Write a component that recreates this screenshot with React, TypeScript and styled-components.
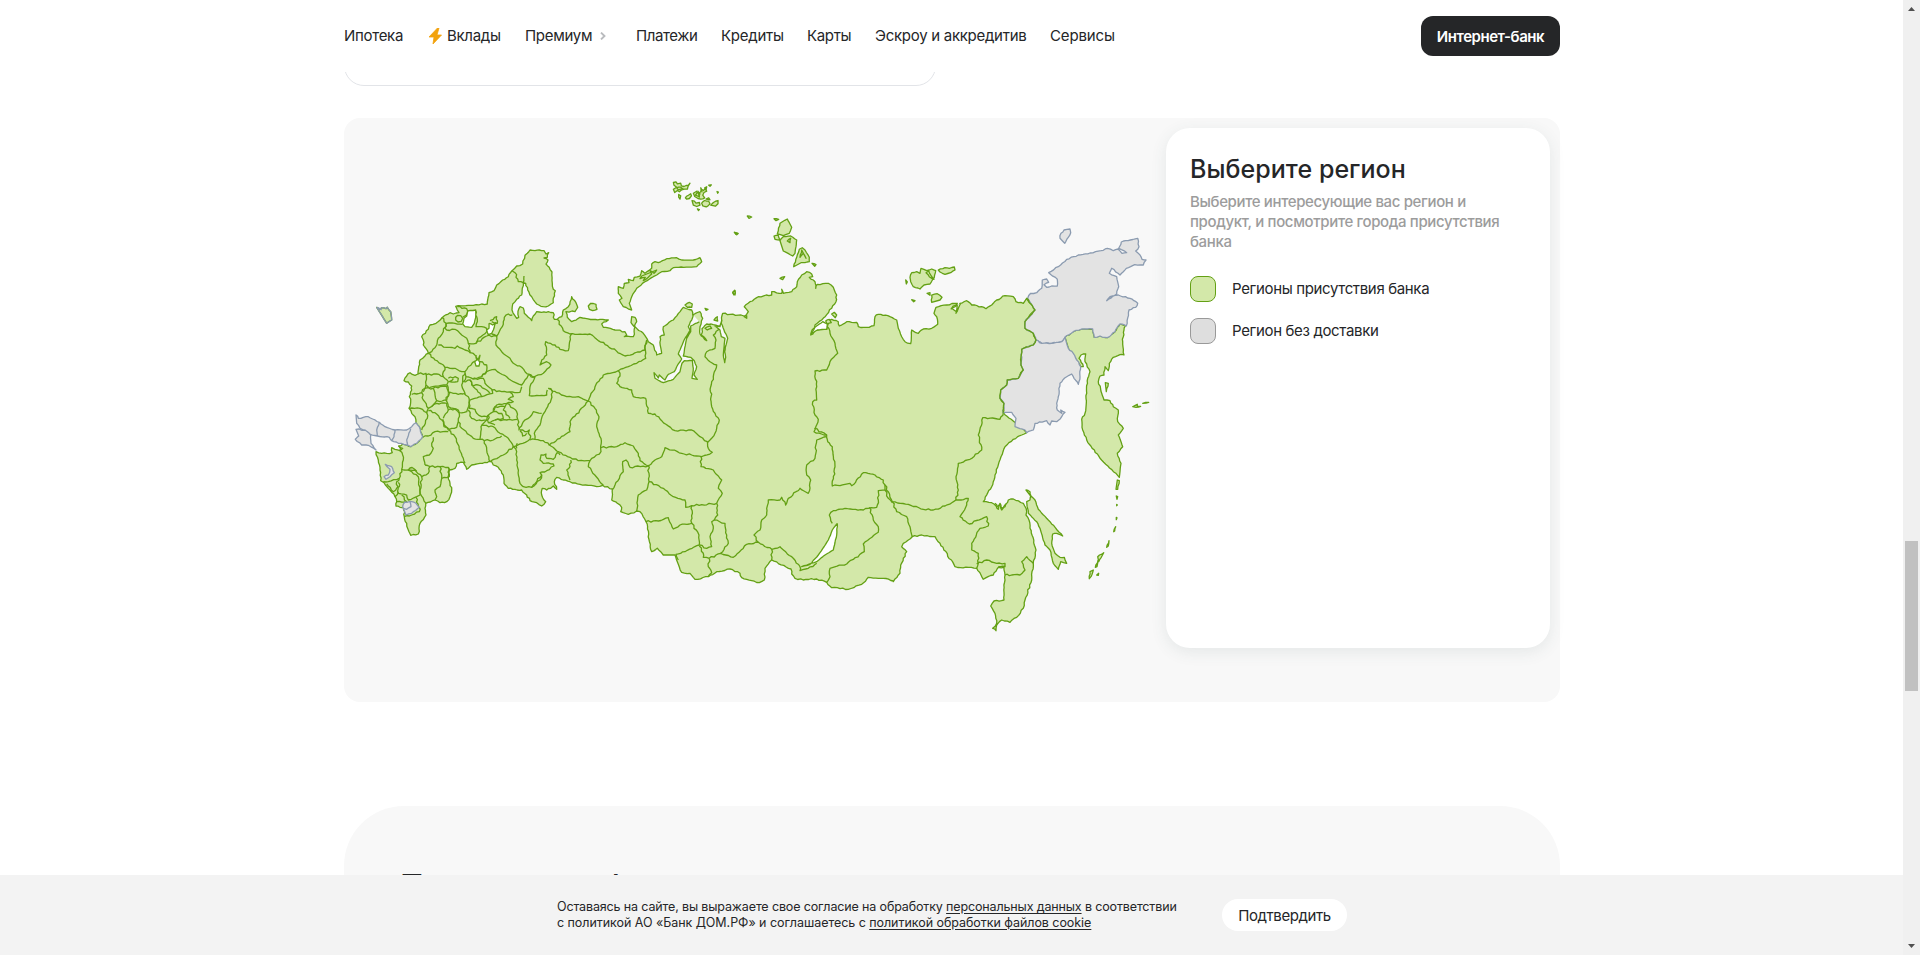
import React from "react";
import styled, { createGlobalStyle } from "styled-components";

const GlobalStyle = createGlobalStyle`
  * { box-sizing: border-box; }
  body { margin: 0; background: #fff; overflow: hidden; }
  body, button { font-family: Inter, "Liberation Sans", sans-serif; }
`;

const Window = styled.div`
  display: grid;
  grid-template-columns: 1fr 17px;
  width: 1920px;
  height: 955px;
  overflow: hidden;
  color: #252628;
`;
const Page = styled.div`
  display: flex;
  flex-direction: column;
  height: 955px;
  min-width: 0;
`;
const Container = styled.div`
  width: 1216px;
  margin-left: 344px;
`;
const Header = styled.header`
  flex: none;
  height: 72px;
  background: #fff;
`;
const HeaderRow = styled(Container)`
  display: flex;
  align-items: center;
  height: 72px;
`;
const Nav = styled.nav`
  display: flex;
  flex: 1;
  align-items: center;
`;
const NavItem = styled.a<{ $w: number; $track: number }>`
  display: flex;
  align-items: center;
  flex: none;
  width: ${(p) => p.$w}px;
  font-size: 15px;
  line-height: 24px;
  letter-spacing: ${(p) => p.$track}px;
  white-space: nowrap;
  svg { flex: none; }
`;
const BankButton = styled.button`
  width: 139px;
  height: 40px;
  padding: 0;
  border: 0;
  border-radius: 12px;
  background: #252628;
  color: #fff;
  font-size: 15px;
  font-weight: 600;
  letter-spacing: -0.45px;
  white-space: nowrap;
`;
const Content = styled.main`
  flex: 1;
  min-height: 0;
  overflow: hidden;
`;
const PreviousCard = styled.div`
  width: 592px;
  height: 14px;
  overflow: hidden;
  display: flex;
  align-items: flex-end;
  &::after {
    content: "";
    flex: 1;
    height: 60px;
    border: 1px solid #e2e4e8;
    border-radius: 20px;
  }
`;
const MapCard = styled.section`
  display: flex;
  align-items: flex-start;
  height: 584px;
  margin-top: 32px;
  padding: 10px 10px 0 0;
  border-radius: 16px;
  background: #f8f8f8;
`;
const MapSvg = styled.svg`
  flex: none;
  width: 822px;
  height: 574px;
  display: block;
`;
const Panel = styled.aside`
  width: 384px;
  height: 520px;
  padding: 25px 24px;
  border-radius: 24px;
  background: #fff;
  box-shadow: 0 4px 16px rgba(60, 90, 90, 0.1);
`;
const PanelTitle = styled.h2`
  margin: 0;
  font-size: 25px;
  font-weight: 450;
  line-height: 32px;
  letter-spacing: 0.05px;
`;
const PanelText = styled.p`
  margin: 7px 0 0;
  color: #9c9c9c;
  font-size: 15px;
  font-weight: 500;
  line-height: 20px;
  letter-spacing: -0.36px;
  white-space: nowrap;
`;
const Legend = styled.ul`
  display: grid;
  gap: 16px;
  margin: 24px 0 0;
  padding: 0;
  list-style: none;
`;
const LegendItem = styled.li`
  display: flex;
  align-items: center;
  gap: 16px;
  height: 26px;
  font-size: 15px;
  letter-spacing: -0.35px;
  white-space: nowrap;
`;
const LegendLabel = styled.span`
  padding-bottom: 2px;
`;
const Swatch = styled.span<{ $fill: string; $line: string }>`
  width: 26px;
  height: 26px;
  border: 1px solid ${(p) => p.$line};
  border-radius: 8px;
  background: ${(p) => p.$fill};
`;
const InfoSection = styled.section`
  height: 400px;
  margin-top: 104px;
  padding: 59px 56px;
  border-radius: 60px;
  background: #f8f8f8;
`;
const InfoTitle = styled.h2`
  margin: 0;
  font-size: 32px;
  font-weight: 500;
  line-height: 44px;
  letter-spacing: 0.45px;
`;
const CookieBar = styled.footer`
  flex: none;
  display: flex;
  align-items: center;
  height: 80px;
  padding-left: 557px;
  background: #f3f3f3;
`;
const CookieText = styled.div`
  flex: none;
  width: 665px;
  padding-bottom: 1px;
  font-size: 12.5px;
  line-height: 16px;
  white-space: nowrap;
  a { text-decoration: underline; text-underline-offset: 2px; }
`;
const CookieLine = styled.div<{ $track: number }>`
  letter-spacing: ${(p) => p.$track}px;
`;
const ConfirmButton = styled.button`
  width: 125px;
  height: 32px;
  padding: 0;
  border: 0;
  border-radius: 16px;
  background: #fff;
  color: #252628;
  font-size: 15px;
  letter-spacing: -0.4px;
`;
const Scrollbar = styled.div`
  display: flex;
  flex-direction: column;
  align-items: center;
  justify-content: space-between;
  padding: 7px 0;
  background: #f0f0f0;
  svg { display: block; flex: none; }
`;
const ThumbTrack = styled.div`
  flex: 1;
  padding-top: 530px;
`;
const Thumb = styled.div`
  width: 13px;
  height: 150px;
  background: #c1c1c1;
`;

/* ---------- Map geometry ---------- */

type Point = [number, number];
type Sheet = "A" | "B" | "C" | "D" | "E" | "F" | "G";

/* Origins of the map sheets; coordinates inside a sheet are thirds of a unit. */
const ORIGIN: Record<Sheet, Point> = {
  A: [340, 230],
  B: [500, 220],
  C: [700, 170],
  D: [900, 250],
  E: [600, 420],
  F: [880, 420],
  G: [726.7, 172.5],
};

const points = (sheet: Sheet, data: string): Point[] => {
  const n = data.trim().split(/[\s,]+/).map(Number);
  const [ox, oy] = ORIGIN[sheet];
  const out: Point[] = [];
  for (let i = 0; i + 1 < n.length; i += 2) out.push([ox + n[i] / 3, oy + n[i + 1] / 3]);
  return out;
};

const wander = (list: Point[], amount: number): string => {
  let d = "";
  let seed = 7;
  const rnd = () => {
    seed = (seed * 16807) % 2147483647;
    return seed / 2147483647 - 0.5;
  };
  list.forEach((p, i) => {
    if (i === 0) {
      d += `M${p[0].toFixed(1)} ${p[1].toFixed(1)}`;
      return;
    }
    const q = list[i - 1];
    const dx = p[0] - q[0];
    const dy = p[1] - q[1];
    const len = Math.hypot(dx, dy);
    const steps = Math.max(1, Math.round(len / 2.6));
    for (let k = 1; k < steps; k++) {
      const t = k / steps;
      const off = rnd() * amount;
      d += `L${(q[0] + dx * t - (dy / len) * off).toFixed(1)} ${(q[1] + dy * t + (dx / len) * off).toFixed(1)}`;
    }
    d += `L${p[0].toFixed(1)} ${p[1].toFixed(1)}`;
  });
  return d;
};

const MAINLAND: Point[] = [
  ...points("A", "652 268 643 268 640 248 625 245 605 247 590 245 580 258 575 272 565 262 553 250 550 234 540 230 534 244 536 262 530 265 524 256 516 240 518 222 530 208 545 195 547 175 550 158 557 160 563 180 575 200 590 222 610 230 625 228 640 218 640 205 646 182 640 178 637 160 636 126 630 118 618 102 624 90 612 84 622 82 626 68 618 72 612 62 598 60 585 62 570 60 562 70 555 76 548 102 530 108 516 122 505 140 488 150 470 165 462 182 447 188 443 210 442 222 400 226 347 229 352 240 357 248 340 252 330 248 312 258 305 265 288 280 270 285 265 298 245 320 250 330 250 345 265 370 255 378 240 390 236 410 234 432 225 436 210 428 200 438 192 452 205 456 215 468 215 480 208 500 212 515 207 535 215 550 225 560 228 578 238 590 248 622 230 640 212 650 200 645 188 642 176 648 188 655 180 662 165 658 155 653 157 668 140 670 125 670 108 665 115 690 120 720 122 752 132 758 150 780 165 800 170 815 168 828 180 832 192 832 193 860 200 880 207 905 212 916 235 912 240 880 258 855 255 835 257 820 285 810 300 818 320 815 330 800 335 780 330 760 325 740 328 720 345 715 350 700 370 697 380 718 395 705 420 700 455 695 460 705 475 712 490 735 492 760 505 775 525 778 545 780 560 795 570 812 590 818 605 828 617 815 605 795 607 775 620 780 632 775 640 768 650 778 643 755 650 742 670 750 690 755 720 763 770 770"),
  ...points("E", "8 196 37 207 35 240 52 250 65 262 62 275 85 283 110 273 120 275 138 305 155 395 172 385 190 405 225 405 245 457 270 460 285 478 325 470 350 455 390 447 420 460 425 473 478 488 493 480 495 445 515 420 573 447 575 462 585 475 610 480 650 477 680 487 695 503 745 508 785 493 805 472 850 475 880 483"),
  ...points("F", "40 485 60 460 62 435 80 395 65 380 70 370 97 350 125 345 165 350 180 370 225 440 290 445 310 478 340 465 355 442 372 442 375 465 372 540 342 543 332 558 345 580 350 610 338 625 348 632 350 615 365 600 390 607 410 592 430 565 435 540 455 480 460 430 468 390 450 325 447 300 438 285"),
  ...points("D", "380 785 370 760 340 747 325 750 315 770 305 775 298 765 290 770 275 758 250 755 275 710 285 675 303 620 315 590 340 568 365 555 380 548 310 488 408 270 400 250 375 235 375 215 405 180 380 145 370 160 348 155 340 140 315 137 290 150 275 165 258 176 245 170 215 165 200 152 180 160 170 185 155 175 172 160 140 165 108 172 105 180"),
  ...points("C", "702 430 710 440 713 463 695 475 670 477 655 490 635 480 632 521 615 515 605 500 595 475 590 450 570 440 535 433 525 440 522 467 500 472 475 470 470 457 440 455 418 468 415 455 395 448 380 455 380 478 350 480 332 495 345 465 365 450 395 415 408 395 410 375 400 352 385 340 352 343 347 355 345 335 328 322 338 320 335 312 320 305 305 315 292 335 290 350 275 365 250 370 245 358 245 370 215 365 215 375 175 380 150 395 133 410 145 425 133 440 140 445 140 437 90 433 68 430"),
  ...points("B", "665 300 664 318 655 318 640 314 620 312 606 326 604 345 620 362 600 342 600 320 608 295 600 275 578 285 575 270 550 262 520 300 490 320 493 345 480 350 485 400 470 405 460 375 445 365 430 340 405 320 400 350 373 350 380 345 375 335 345 330 310 322 305 312 325 300 300 298 280 298 240 292 215 305 202 292 198 275 225 275 233 262 228 248 215 230 205 260 190 270 185 290 172 298"),
];

const BORDERS: [Sheet, string[]][] = [
  ["A", [
    "516 122 525 128 535 155 550 158 552 138",
    "405 240 412 275 408 290 425 290 440 295 440 305",
    "352 230 380 236 383 243 378 256 368 262",
    "517 255 505 252 493 262 490 275 487 290 470 318 455 312",
    "305 262 318 280 345 280 367 283", "450 272 460 268 470 260 472 280 455 275",
    "318 280 315 295 320 300 345 298 360 310 380 325 385 340 408 340 415 325 440 305",
    "318 280 310 305 295 325 290 345 275 365 265 370",
    "295 345 320 352 345 355 352 348 375 360 400 370 410 378", "385 340 390 370",
    "440 318 470 318 468 345 485 365 510 385 520 400 545 412 562 432", "408 340 440 318",
    "265 370 285 390 310 405 315 412 345 415 365 425 375 425 385 410 405 393",
    "420 395 440 405 440 422 425 440 400 447 378 440 375 430",
    "234 432 258 430 258 465 270 475", "258 435 290 432 310 440 325 455 320 465 270 472",
    "258 465 245 488 215 493", "315 412 310 425 310 440",
    "325 445 345 440 355 445 353 455 328 455 340 447",
    "375 425 368 445 365 465 375 490 355 493 325 487 322 465",
    "245 488 250 510 265 535 260 548 240 535 207 535",
    "250 485 255 475 280 475 285 495 290 512 280 525 265 535",
    "280 475 300 470 320 470 328 490 320 510 300 515 290 512",
    "275 530 290 520 320 520 325 540 310 565", "265 542 285 548 305 570",
    "260 548 262 565 245 600", "305 570 318 590 325 600",
    "325 490 318 510 325 530 355 540 358 548 380 545 388 520 385 500 372 490",
    "325 540 345 537 358 550 355 575 350 592 328 598 312 590 308 568",
    "378 440 370 455 390 450 400 470 420 490 425 500 390 510",
    "395 447 430 445 435 460 455 478 458 490 425 500", "390 450 395 465 415 465 440 480 450 490",
    "425 440 440 425 465 418 480 430 500 440 520 455 545 465 555 450 565 435", "455 480 485 485 540 487 545 470",
    "510 487 520 500 505 508 520 515 500 520 470 525 460 545 440 560 425 560 410 550 405 538 388 535 390 510",
    "385 540 395 565 410 572 440 570 445 555", "355 575 365 595 400 625 420 628 423 590 440 570",
    "460 545 465 530 495 530 500 520", "460 545 485 550 490 565 465 570 445 578",
    "500 520 520 535 530 545 533 568", "495 530 490 540 510 565", "445 555 445 578 465 585",
    "565 435 585 440 570 470 568 497 620 495 622 480",
    "533 568 537 600 550 575 575 555 580 545 605 550",
    "465 570 500 570 533 568", "540 600 555 605 568 600 565 610 572 618 570 628 548 640 520 650 505 625 480 610 460 590 425 585",
    "540 602 548 618 560 610", "433 632 460 630 485 618", "420 628 433 632 440 660 450 695", "520 650 490 675 450 695",
    "325 600 345 620 370 685 375 700", "248 622 265 618 285 605 325 605",
    "280 622 275 640 280 655 268 675 250 680 255 705",
    "176 648 188 675 190 690 185 718 205 720 225 720 245 740 265 730 270 710 255 705", "270 710 300 710 325 712 328 720",
    "185 718 178 745 145 755 130 755", "178 745 170 755 175 790 200 795 205 810 230 800 240 795 235 740 215 725 205 720",
    "245 740 240 790 258 820", "325 712 328 740 305 745 300 770 285 780 290 800 285 810", "300 710 305 745",
    "175 757 178 770 160 785 140 762", "175 785 165 800", "185 795 200 815 170 815", "228 802 235 830", "190 835 195 818",
    "238 832 238 845 215 855 193 860", "205 720 210 714 222 716 230 724",
    "520 650 530 665 530 690 540 760 550 770 575 772 605 735 600 728 620 722 642 708 640 702 610 700 600 690 603 675 618 672 620 685 640 688 652 668",
    "530 655 532 640", "605 735 600 750 575 772", "570 630 585 628",
    "650 668 660 675", "692 690 690 710 680 720 690 750",
    "562 432 580 442 610 430 633 405 620 395 600 405 605 390 620 375 617 335 645 345 660 358 685 362 690 320 695 310",
  ]],
  ["B", [
    "172 298 190 332 210 342 270 342 290 358 375 408 435 390 440 360",
    "440 360 435 385 437 415 410 430 385 440 355 452 330 460 310 465 285 500 265 543",
    "145 505 170 518 200 530 235 530 265 543 210 605 210 635 180 655 148 675 170 693 210 712 235 722 270 722",
    "145 505 158 515 153 540 143 560 130 582 120 615 103 640 105 658 130 662 148 675",
    "355 452 360 468 350 490 360 500 395 510 400 530 437 535 445 580 465 582 485 602 525 632 575 630 600 650 622 665 625 685 637 697 605 710 575 705 545 700 495 683 485 710 465 720 445 738",
    "265 543 285 565 297 590 290 620 303 655 303 695 270 722 265 740 310 795",
    "303 683 350 680 375 668 400 678 415 700 420 722 445 738 390 742 378 720 368 725 370 755 345 795 338 808",
    "650 318 655 330 640 345 648 360 645 385 620 395 615 410 630 425 650 435 640 470 632 500 635 560 645 580 658 600 650 625 645 640 630 660 622 668",
  ]],
  ["E", [
    "145 135 147 185 140 210 115 225 110 273", "147 185 190 205 220 230 255 240 257 262 275 257 350 250",
    "303 110 303 140 340 150 365 180 355 205 367 220 350 250 353 285 343 300 375 310 380 345 385 370 362 400",
    "138 305 175 303 205 293 220 327 240 315 275 310 275 257", "275 310 297 345 298 375 255 395 228 403 235 420",
    "298 375 320 385 335 380 330 350 340 325 335 305 343 300", "298 378 310 400 310 412 328 415",
    "328 415 362 400 400 412 440 373 475 367 515 388 540 380 575 410 600 440 600 452 625 445 650 430",
    "328 415 325 440 335 458 325 470", "515 388 515 420",
    "475 367 462 345 480 330 485 300 500 285 500 265 505 240 540 240 545 232 557 255 565 235 600 205 625 220 632 180 620 165 620 135 645 115 650 60 680 50",
    "643 25 680 45 683 65 697 80 705 140 697 198 750 190 755 197 790 158 825 165 850 180 855 210 835 212 835 240 830 262 805 265 790 270 735 265 700 272 688 285 697 310",
    "808 262 820 300 835 320 835 337 790 372 793 395 740 432 690 445 690 470 680 487", "855 210 865 235 877 248",
  ]],
  ["F", [
    "15 195 37 245 85 253 130 268 160 270 195 258 228 240 265 235 260 255 240 290 268 312 320 290 325 318 300 325 275 370 275 390 295 400 295 430 290 445",
    "37 245 50 275 80 290 90 320 97 350",
    "290 432 320 420 350 430 375 430 375 440 355 440", "375 465 395 465 420 465 435 450 425 425 440 410 455 425 460 430",
    "345 250 355 268 360 250 365 270 378 252",
  ]],
  ["D", [
    "168 750 175 720 168 680 175 640 210 628 245 600 235 555 248 503 300 508 310 488",
    "310 488 312 460 300 445 302 420 320 405 322 390 355 385 370 360 363 345 365 298 400 285 408 270",
  ]],
  ["C", [
    "380 455 390 490 405 520 413 550 390 575 380 600 345 603 350 650 350 690 338 695 345 735 355 748 342 785 380 795",
  ]],
];

const GREEN_ISLANDS: [Sheet, string][] = [
  ["A", "110 232 120 238 125 233 138 236 142 232 152 245 155 270 140 280"],
  ["A", "347 262 353 256 362 257 368 265 364 274 354 276 347 270"],
  ["B", "395 270 370 260 358 240 366 235 355 220 355 200 370 205 373 190 387 188 385 178 400 182 403 172 420 168 425 152 435 160 455 145 455 132 465 125 475 128 500 116 530 113 545 120 580 120 600 113 605 125 590 140 520 143 510 152 485 155 470 165 460 170 435 185 410 205 395 230 388 250"],
  ["B", "425 168 420 176 436 172 430 182 445 172 455 162 450 152 462 160 470 150"],
  ["B", "395 290 405 292 410 305 403 320 393 308"],
  ["B", "265 258 272 250 288 253 291 268 278 272 268 268"],
  ["B", "555 255 568 247 577 252 575 262 562 262"],
  ["B", "642 300 652 290 653 303"], ["B", "615 325 630 318 635 325 622 330"], ["B", "615 265 624 268 618 271"],
  ["B", "698 217 704 211 706 220 701 224"], ["B", "703 37 714 40 710 44"],
  ["C", "235 182 240 160 262 147 268 158 275 172 268 190 250 197 232 192"],
  ["C", "222 198 235 196 240 210 225 208"], ["C", "240 212 250 200 272 198 290 210 288 230 285 250 278 258 250 243"],
  ["C", "262 213 272 205 270 218"], ["C", "281 290 290 262 298 238 307 233 315 240 328 262 328 275 315 278 303 278"],
  ["C", "305 240 300 262 310 250 318 265"], ["C", "336 280 348 284 344 289"], ["C", "222 146 236 148 228 152"],
  ["C", "142 138 155 141 147 145"], ["C", "104 187 114 191 108 193"], ["C", "240 325 254 320 248 329"], ["C", "98 368 105 362 105 375"],
  ["C", "395 432 403 427 410 435 406 443"], ["C", "377 453 388 448 394 458 382 462"],
  ["C", "630 322 635 308 650 305 660 310 663 295 680 302 695 297 707 302 703 322 690 342 672 345 660 357 640 350 632 335"],
  ["C", "678 308 688 320 702 328 692 315 686 303"],
  ["C", "715 300 735 293 748 295 763 291 765 300 752 308 735 313 720 306"],
  ["C", "695 397 695 375 712 371 726 382 720 390"], ["C", "681 370 690 368 690 376"], ["C", "617 330 622 336 619 342"], ["C", "635 389 645 392 641 395"],
  ["G", "-160 30 -152 28 -148 34 -138 32 -136 40 -128 42 -115 38 -110 32 -116 42 -118 50 -135 52 -142 58 -148 54 -156 60 -160 50 -150 44 -158 38"],
  ["G", "-150 46 -138 44 -130 50 -145 52"],
  ["G", "-144 66 -138 70 -140 80 -144 74"], ["G", "-124 76 -115 68 -108 64 -106 70 -112 78 -120 80"],
  ["G", "-100 62 -90 56 -86 64 -78 58 -76 50 -70 54 -64 48 -60 56 -68 60 -72 68 -66 76 -78 80 -86 78 -96 72"],
  ["G", "-94 68 -84 72 -80 64 -88 60"], ["G", "-86 56 -82 74"], ["G", "-78 46 -74 58"],
  ["G", "-54 38 -46 37 -50 41"], ["G", "-29 57 -25 59 -27 62"],
  ["G", "-104 84 -97 86 -92 92 -82 90 -80 98 -90 102 -100 98"], ["G", "-75 92 -66 84 -54 86 -50 94 -60 103 -72 100"],
  ["G", "-62 80 -54 76 -50 82"],
  ["G", "-48 98 -40 90 -26 84 -26 94 -34 101"], ["G", "-88 109 -82 111 -85 114"], ["G", "-66 46 -60 43 -62 52"],
  ["F", "438 210 450 215 453 228 465 240 475 268 510 305 548 348 530 340 518 342 515 370 525 400 540 412 553 412 560 430 542 425 535 448 520 430 510 390 495 375 480 325 470 305 445 280 440 245 450 240 452 228"],
  ["F", "712 180 718 182 713 208 708 208"], ["F", "709 228 713 230 711 238"], ["F", "710 253 712 255 710 257"], ["F", "709 292 711 293 709 299"],
  ["F", "701 335 707 320 704 333"], ["F", "680 382 687 362 685 378"], ["F", "653 410 671 398 656 425"], ["F", "646 442 654 422 651 440"], ["F", "628 476 630 455 640 450 633 470"], ["F", "650 465 656 460 655 466"],
  ["D", "616 398 625 400 619 425"], ["D", "698 470 706 466 712 463 712 469 722 469 708 472"], ["D", "728 460 746 457 738 459"],
];

const KAMCHATKA = points("D", "495 262 520 245 545 237 578 237 583 262 600 258 622 263 645 245 660 222 676 228 672 240 668 275 672 315 660 314 640 322 628 340 625 362 615 350 612 375 600 378 595 395 605 430 612 450 630 452 640 470 655 480 653 515 670 535 655 555 668 590 652 610 663 640 658 682 600 625 560 570 548 540 545 508 555 490 560 430 563 385 570 365 555 335 557 312 543 315 537 325 550 350 542 350 515 310 505 295");

const GREY_REGIONS: [Sheet, string][] = [
  ["D", "383 145 392 130 410 128 425 115 427 90 440 87 446 97 432 104 440 112 455 108 472 108 472 88 446 68 475 50 500 28 535 15 570 9 603 2 622 -5 640 2 654 -3 666 10 680 8 656 -5 664 -24 691 -30 713 -35 717 -10 707 3 720 15 726 28 738 30 730 45 704 44 679 55 660 75 635 55 628 70 650 80 656 110 650 132 620 152 630 140 655 135 690 145 713 160 707 172 687 180 679 228 660 222 645 245 622 263 600 258 583 262 578 237 545 237 520 245 495 262 485 275 455 280 425 280 408 270 400 250 375 235 375 215 405 180"],
  ["D", "408 270 425 280 455 280 485 275 495 262 505 295 520 310 542 350 540 380 535 403 522 385 515 372 500 380 480 400 475 440 470 460 472 480 485 490 482 480 495 487 485 500 470 515 455 513 450 525 443 518 440 512 405 520 400 540 380 548 375 540 345 530 348 505 335 487 310 488 312 460 300 445 302 420 320 405 322 390 355 385 370 360 363 345 365 298 400 285"],
  ["D", "480 -35 483 -50 492 -60 510 -63 512 -52 505 -38 494 -20 487 -28"],
  ["A", "48 555 55 565 85 560 118 577 135 590 165 600 200 600 215 590 228 578 238 590 248 620 230 640 212 650 200 645 175 640 155 632 148 622 112 618 90 613 60 595 50 580"],
  ["A", "48 598 75 600 92 615 93 640 108 660 85 646 65 645 46 628 56 618"],
  ["A", "188 830 195 816 215 815 228 820 238 832 215 850 198 855"],
  ["A", "132 740 145 735 150 718 136 703 155 710 163 728 150 740 138 748"],
];

const GREY_LINES: [Sheet, string][] = [
  ["A", "118 577 110 600 112 618"], ["A", "165 600 162 620 155 632"], ["A", "212 596 200 630 203 645"],
  ["A", "210 815 213 830 200 838 190 835"], ["A", "110 232 120 238 125 233 138 236 142 232 152 245 155 270 140 280 110 232"], ["A", "110 232 125 240"],
];

/* Gulfs and lakes, drawn as open outlines so that their mouths stay clear. */
const WATER: [Sheet, string, string][] = [
  ["A", "383 243 407 240 407 262 403 280 395 292 375 290 368 282 372 265 380 258 383 243", "#fff"],
  ["A", "447 280 458 285 467 278 460 300 455 310 445 314 440 300 447 295 447 280", "#fff"],
  ["A", "407 378 412 390 420 376 416 392 419 395 417 408 408 408 404 395 410 390 407 378", "#fff"],
  ["B", "580 285 578 292 565 320 570 332 555 355 535 402 545 417 530 440 523 455 505 463 495 480 478 465 475 474 462 458 465 475 490 488 520 478 540 455 546 430 553 422 577 421 580 445 576 475 592 478 582 465 590 440 583 422 572 412 550 408 560 355 572 335 572 318 598 305", "#f8f8f8"],
  ["B", "665 300 660 320 645 318 660 330 664 350 675 355 670 405 674 428 677 412 674 395 678 375 683 355 672 330 664 310", "#f8f8f8"],
  ["E", "712 310 710 345 700 390 675 405 650 425 605 440 630 433 655 405 685 360 697 330 712 310", "#fff"],
  ["C", "333 492 345 472 368 455 382 462 380 478 352 480 333 492", "#fff"],
  ["D", "152 178 172 165 168 190 182 160", "#f8f8f8"],
];

const GREEN = { fill: "#d3e8a9", stroke: "#63a014" };
const GREY = { fill: "#e3e3e3", stroke: "#8b9bb0" };

function RussiaMap() {
  return (
    <MapSvg viewBox="344 128 822 574" strokeWidth={1.3} strokeLinejoin="round" role="img" aria-label="Карта регионов">
      <path d={wander(MAINLAND, 1.4) + "Z"} {...GREEN} />
      <g fill="none" stroke={GREEN.stroke}>
        {BORDERS.flatMap(([sheet, lines]) => lines.map((l) => <path key={sheet + l} d={wander(points(sheet, l), 1.7)} />))}
      </g>
      {WATER.map(([sheet, l, fill]) => <path key={l} d={wander(points(sheet, l), 0.5)} fill={fill} stroke={GREEN.stroke} />)}
      <path d={wander(KAMCHATKA, 1.2) + "Z"} {...GREEN} />
      {GREEN_ISLANDS.map(([sheet, l]) => <path key={l} d={wander(points(sheet, l), 0.7) + "Z"} {...GREEN} />)}
      {GREY_REGIONS.map(([sheet, l]) => <path key={l} d={wander(points(sheet, l), 1.2) + "Z"} {...GREY} />)}
      <g fill="none" stroke={GREY.stroke}>
        {GREY_LINES.map(([sheet, l]) => <path key={l} d={wander(points(sheet, l), 0.5)} />)}
      </g>
      <path d={wander(points("D", "380 145 405 180 375 215 375 235 400 250 408 270 400 285 365 298 363 345 370 360 355 385 322 390 320 405 302 420 300 445 312 460 310 488"), 1)} fill="none" stroke={GREEN.stroke} />
    </MapSvg>
  );
}

const Bolt = () => (
  <svg width="18" height="16" viewBox="0 0 18 16">
    <path d="M8.5 0 0 9h5l-1 7 8.5-9H8L10 0Z" fill="#f2a20d" stroke="#f2a20d" strokeWidth=".8" strokeLinejoin="round" />
  </svg>
);
const ChevronIcon = styled.svg`
  margin-left: 8px;
`;
const Chevron = () => (
  <ChevronIcon width="6" height="8" viewBox="0 0 6 8">
    <path d="m1 .6 3.5 3.4L1 7.4" fill="none" stroke="#b9bbbe" strokeWidth="1.9" />
  </ChevronIcon>
);

const NAV = [
  { label: "Ипотека", w: 85, track: -0.3 },
  { label: "Вклады", w: 96, track: -0.3, bolt: true },
  { label: "Премиум", w: 111, track: -0.3, chevron: true },
  { label: "Платежи", w: 85, track: -0.4 },
  { label: "Кредиты", w: 86, track: -0.25 },
  { label: "Карты", w: 68, track: -0.35 },
  { label: "Эскроу и аккредитив", w: 175, track: -0.28 },
  { label: "Сервисы", w: 66, track: -0.15 },
];

export default function App() {
  return (
    <Window>
      <GlobalStyle />
      <Page>
        <Header>
          <HeaderRow>
            <Nav>
              {NAV.map((n) => (
                <NavItem key={n.label} $w={n.w} $track={n.track}>
                  {n.bolt && <Bolt />}
                  {n.label}
                  {n.chevron && <Chevron />}
                </NavItem>
              ))}
            </Nav>
            <BankButton>Интернет-банк</BankButton>
          </HeaderRow>
        </Header>
        <Content>
          <Container>
            <PreviousCard />
            <MapCard>
              <RussiaMap />
              <Panel>
                <PanelTitle>Выберите регион</PanelTitle>
                <PanelText>
                  Выберите интересующие вас регион и<br />
                  продукт, и посмотрите города присутствия<br />
                  банка
                </PanelText>
                <Legend>
                  <LegendItem>
                    <Swatch $fill="#d3e8a9" $line="#63a014" />
                    <LegendLabel>Регионы присутствия банка</LegendLabel>
                  </LegendItem>
                  <LegendItem>
                    <Swatch $fill="#dedede" $line="#999" />
                    <LegendLabel>Регион без доставки</LegendLabel>
                  </LegendItem>
                </Legend>
              </Panel>
            </MapCard>
            <InfoSection>
              <InfoTitle>Полезная информация</InfoTitle>
            </InfoSection>
          </Container>
        </Content>
        <CookieBar>
          <CookieText>
            <CookieLine $track={-0.14}>
              Оставаясь на сайте, вы выражаете свое согласие на обработку <a>персональных данных</a> в соответствии
            </CookieLine>
            <CookieLine $track={-0.05}>
              с политикой АО «Банк ДОМ.РФ» и соглашаетесь с <a>политикой обработки файлов cookie</a>
            </CookieLine>
          </CookieText>
          <ConfirmButton>Подтвердить</ConfirmButton>
        </CookieBar>
      </Page>
      <Scrollbar>
        <svg width="7" height="4" viewBox="0 0 7 4"><path d="M3.5 0 7 4H0Z" fill="#505050" /></svg>
        <ThumbTrack><Thumb /></ThumbTrack>
        <svg width="7" height="4" viewBox="0 0 7 4"><path d="M0 0h7L3.5 4Z" fill="#505050" /></svg>
      </Scrollbar>
    </Window>
  );
}
